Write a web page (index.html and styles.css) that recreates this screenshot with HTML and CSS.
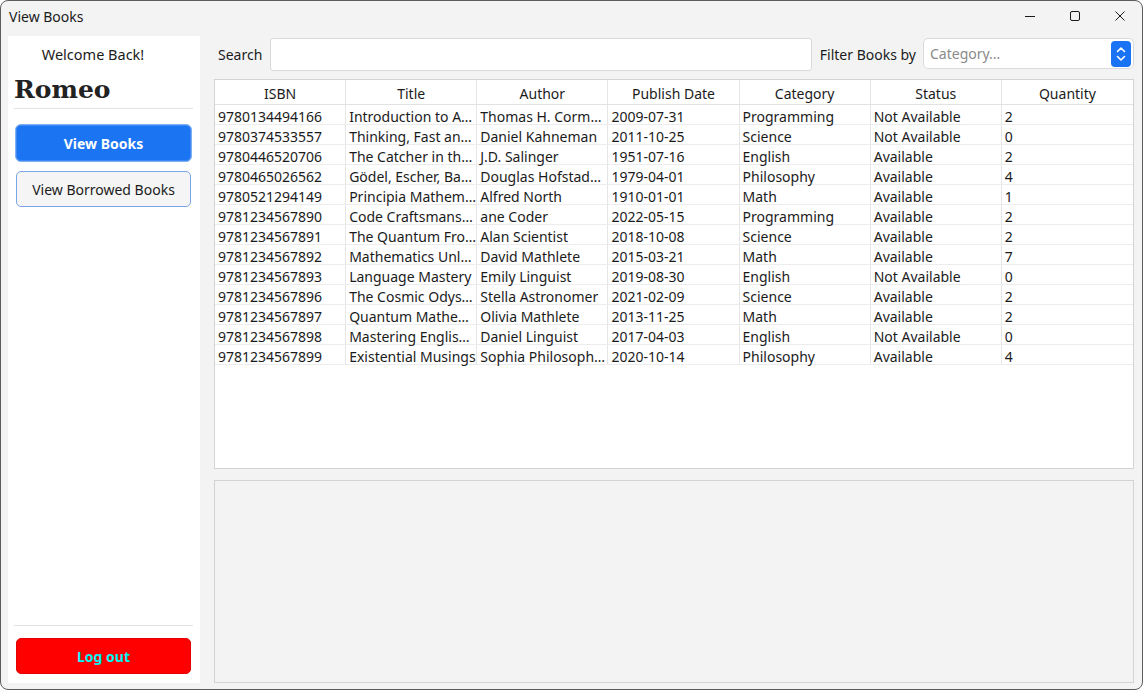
FILE: index.html
```html
<!DOCTYPE html>
<html>
<head>
<meta charset="utf-8">
<title>View Books</title>
<link rel="stylesheet" href="styles.css">
</head>
<body>
<div class="window">
  <div class="titlebar">
    <span class="title">View Books</span>
    <div class="controls">
      <span class="ctl"><svg width="12" height="12" viewBox="0 0 12 12"><path d="M1 6.5h10" stroke="#1a1a1a" stroke-width="1"/></svg></span>
      <span class="ctl"><svg width="12" height="12" viewBox="0 0 12 12"><rect x="1.5" y="1.5" width="9" height="9" rx="1.5" fill="none" stroke="#1a1a1a" stroke-width="1"/></svg></span>
      <span class="ctl"><svg width="12" height="12" viewBox="0 0 12 12"><path d="M1.5 1.5l9 9M10.5 1.5l-9 9" stroke="#1a1a1a" stroke-width="1"/></svg></span>
    </div>
  </div>
  <div class="content">
    <aside class="sidebar">
      <div class="welcome">Welcome Back!</div>
      <div class="username">Romeo</div>
      <div class="rule"></div>
      <button class="btn btn-primary">View Books</button>
      <button class="btn btn-secondary">View Borrowed Books</button>
      <div class="spacer"></div>
      <div class="rule"></div>
      <button class="btn btn-logout">Log out</button>
    </aside>
    <main class="main">
      <div class="toolbar">
        <label class="lbl">Search</label>
        <div class="search"></div>
        <label class="lbl">Filter Books by</label>
        <div class="combo">
          <span class="placeholder">Category...</span>
          <span class="spin"><svg width="12" height="20" viewBox="0 0 12 20"><path d="M2.5 7.5L6 4l3.5 3.5M2.5 12.5L6 16l3.5-3.5" fill="none" stroke="#fff" stroke-width="1.6" stroke-linecap="round" stroke-linejoin="round"/></svg></span>
        </div>
      </div>
      <div class="table">
        <div class="row head">
          <div class="cell">ISBN</div><div class="cell">Title</div><div class="cell">Author</div><div class="cell">Publish Date</div><div class="cell">Category</div><div class="cell">Status</div><div class="cell">Quantity</div>
        </div>
        <div class="row"><div class="cell">9780134494166</div><div class="cell">Introduction to A…</div><div class="cell">Thomas H. Corm…</div><div class="cell">2009-07-31</div><div class="cell">Programming</div><div class="cell">Not Available</div><div class="cell">2</div></div>
        <div class="row"><div class="cell">9780374533557</div><div class="cell">Thinking, Fast an…</div><div class="cell">Daniel Kahneman</div><div class="cell">2011-10-25</div><div class="cell">Science</div><div class="cell">Not Available</div><div class="cell">0</div></div>
        <div class="row"><div class="cell">9780446520706</div><div class="cell">The Catcher in th…</div><div class="cell">J.D. Salinger</div><div class="cell">1951-07-16</div><div class="cell">English</div><div class="cell">Available</div><div class="cell">2</div></div>
        <div class="row"><div class="cell">9780465026562</div><div class="cell">Gödel, Escher, Ba…</div><div class="cell">Douglas Hofstad…</div><div class="cell">1979-04-01</div><div class="cell">Philosophy</div><div class="cell">Available</div><div class="cell">4</div></div>
        <div class="row"><div class="cell">9780521294149</div><div class="cell">Principia Mathem…</div><div class="cell">Alfred North</div><div class="cell">1910-01-01</div><div class="cell">Math</div><div class="cell">Available</div><div class="cell">1</div></div>
        <div class="row"><div class="cell">9781234567890</div><div class="cell">Code Craftsmans…</div><div class="cell">ane Coder</div><div class="cell">2022-05-15</div><div class="cell">Programming</div><div class="cell">Available</div><div class="cell">2</div></div>
        <div class="row"><div class="cell">9781234567891</div><div class="cell">The Quantum Fro…</div><div class="cell">Alan Scientist</div><div class="cell">2018-10-08</div><div class="cell">Science</div><div class="cell">Available</div><div class="cell">2</div></div>
        <div class="row"><div class="cell">9781234567892</div><div class="cell">Mathematics Unl…</div><div class="cell">David Mathlete</div><div class="cell">2015-03-21</div><div class="cell">Math</div><div class="cell">Available</div><div class="cell">7</div></div>
        <div class="row"><div class="cell">9781234567893</div><div class="cell">Language Mastery</div><div class="cell">Emily Linguist</div><div class="cell">2019-08-30</div><div class="cell">English</div><div class="cell">Not Available</div><div class="cell">0</div></div>
        <div class="row"><div class="cell">9781234567896</div><div class="cell">The Cosmic Odys…</div><div class="cell">Stella Astronomer</div><div class="cell">2021-02-09</div><div class="cell">Science</div><div class="cell">Available</div><div class="cell">2</div></div>
        <div class="row"><div class="cell">9781234567897</div><div class="cell">Quantum Mathe…</div><div class="cell">Olivia Mathlete</div><div class="cell">2013-11-25</div><div class="cell">Math</div><div class="cell">Available</div><div class="cell">2</div></div>
        <div class="row"><div class="cell">9781234567898</div><div class="cell">Mastering Englis…</div><div class="cell">Daniel Linguist</div><div class="cell">2017-04-03</div><div class="cell">English</div><div class="cell">Not Available</div><div class="cell">0</div></div>
        <div class="row"><div class="cell">9781234567899</div><div class="cell">Existential Musings</div><div class="cell">Sophia Philosoph…</div><div class="cell">2020-10-14</div><div class="cell">Philosophy</div><div class="cell">Available</div><div class="cell">4</div></div>
      </div>
      <div class="panel"></div>
    </main>
  </div>
</div>
</body>
</html>
```
FILE: styles.css
```css
* { box-sizing: border-box; }
html, body { margin: 0; padding: 0; background: #ffffff; }
body {
  font-family: "Noto Sans", "Open Sans", sans-serif;
  font-size: 14px;
  color: #1b1b1b;
}
.window {
  width: 1143px;
  height: 690px;
  border: 1px solid #5c5c5c;
  border-radius: 8px;
  background: #f3f3f3;
  display: flex;
  flex-direction: column;
  overflow: hidden;
}
.titlebar {
  height: 34px;
  flex: none;
  display: flex;
  align-items: center;
  padding-left: 8px;
}
.title { font-size: 14px; color: #1b1b1b; margin-top: -3px; }
.controls { margin-left: auto; display: flex; height: 100%; }
.ctl {
  width: 45px;
  display: flex;
  align-items: center;
  justify-content: center;
  margin-top: -4px;
}
.content {
  flex: 1;
  display: flex;
  gap: 14px;
  padding: 1px 8px 6px 7px;
  min-height: 0;
}
.sidebar {
  width: 192px;
  flex: none;
  background: #ffffff;
  display: flex;
  flex-direction: column;
  padding: 8px 7px 9px 6px;
}
.welcome {
  text-align: center;
  line-height: 20px;
  height: 20px;
  font-size: 14.5px;
  padding-right: 21px;
}
.username {
  font-family: "DejaVu Serif", serif;
  font-weight: bold;
  font-size: 25px;
  line-height: 30px;
  margin-top: 11px;
  color: #222;
}
.rule { height: 1px; background: #e3e3e3; margin-top: 3px; }
.spacer + .rule { margin-top: 0; }
.btn {
  font-family: inherit;
  font-size: 14px;
  cursor: pointer;
  display: block;
}
.btn-primary {
  margin-top: 15px;
  height: 38px;
  margin-left: 1px;
  margin-right: 1px;
  background: #1b74f1;
  color: #ffffff;
  font-weight: bold;
  border: 1px solid #7fb0f5;
  border-radius: 6px;
  box-shadow: inset 0 0 0 1px #3e88f3;
}
.btn-secondary {
  margin-top: 9px;
  height: 36px;
  margin-left: 2px;
  margin-right: 2px;
  background: #f5f5f5;
  color: #1b1b1b;
  border: 1px solid #79a6e6;
  border-radius: 5px;
}
.spacer { flex: 1; }
.btn-logout {
  margin-top: 12px;
  height: 36px;
  margin-left: 2px;
  margin-right: 2px;
  background: #ff0000;
  color: #00f5f5;
  font-weight: bold;
  border: 1px solid #e60000;
  border-radius: 5px;
}
.main {
  flex: 1;
  display: flex;
  flex-direction: column;
  padding-top: 2px;
  min-width: 0;
}
.toolbar {
  display: flex;
  align-items: center;
  height: 33px;
  padding-left: 4px;
}
.lbl { white-space: nowrap; }
.search {
  flex: 1;
  height: 33px;
  background: #ffffff;
  border: 1px solid #dadada;
  border-radius: 3px;
  margin-left: 8px;
  margin-right: 8px;
}
.combo {
  width: 211px;
  height: 31px;
  margin-left: 7px;
  background: #ffffff;
  border: 1px solid #dadada;
  border-radius: 5px;
  display: flex;
  align-items: center;
  padding-left: 6px;
  padding-right: 2px;
  margin-top: -2px;
}
.placeholder { color: #8a8a8a; flex: 1; }
.spin {
  width: 20px;
  height: 26px;
  background: #1a73f2;
  border-radius: 4px;
  display: flex;
  align-items: center;
  justify-content: center;
}
.table {
  margin-top: 8px;
  height: 390px;
  flex: none;
  background: #ffffff;
  border: 1px solid #d3d3d3;
}
.row {
  display: grid;
  grid-template-columns: repeat(7, 1fr);
  grid-template-rows: 19px;
  height: 20px;
  border-bottom: 1px solid #ececec;
}
.row.head { height: 25px; grid-template-rows: 24px; border-bottom: 1px solid #e2e2e2; }
.cell {
  border-right: 1px solid #e6e6e6;
  padding-left: 3px;
  padding-top: 4px;
  white-space: nowrap;
  line-height: 15px;
  min-width: 0;
}
.cell:last-child { border-right: none; }
.head .cell { text-align: center; line-height: 20px; padding-left: 0; padding-top: 4px; }
.panel {
  margin-top: 11px;
  flex: 1;
  background: #f3f3f3;
  border: 1px solid #d3d3d3;
}
```
